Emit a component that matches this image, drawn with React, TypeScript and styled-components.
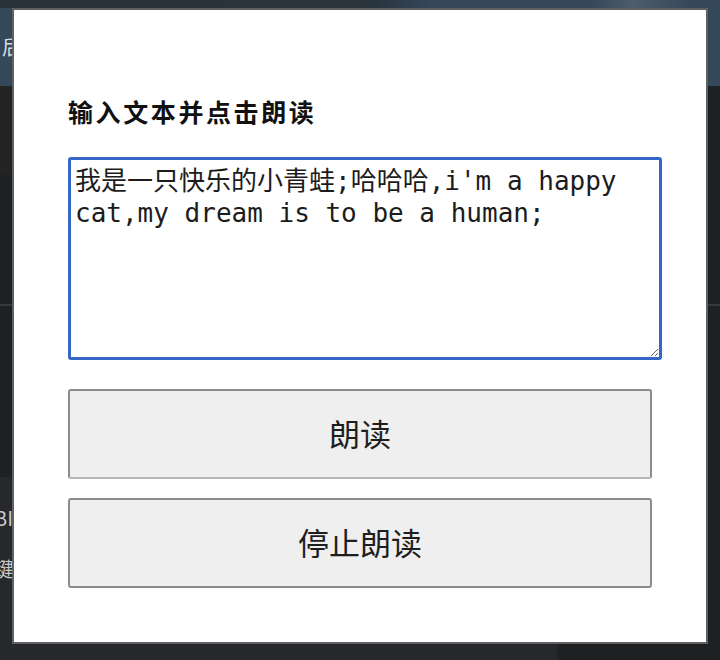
import React from "react";
import styled, { createGlobalStyle } from "styled-components";

const Global = createGlobalStyle`
  html, body { margin: 0; padding: 0; background: #1f2023; }
  * { box-sizing: border-box; }
`;

const Screen = styled.div`
  position: relative;
  width: 720px;
  height: 660px;
  overflow: hidden;
  font-family: "Noto Sans CJK SC", "Noto Sans", sans-serif;
`;

/* ---------- dimmed application behind the dialog ---------- */
const Backdrop = styled.div`
  display: flex;
  flex-direction: column;
  width: 100%;
  height: 100%;
`;

const Header = styled.header`
  display: flex;
  flex-direction: column;
  height: 86px;
  background: #34485a;
`;

const HeaderStrip = styled.div`
  height: 8px;
  background: linear-gradient(90deg, #27323b 0%, #29343d 52%, #34485a 60%, #34485a 82%, #4d5d6b 88%, #34485a 96%);
`;

const HeaderTitle = styled.div`
  padding: 25px 0 0 2px;
  color: #d8dde2;
  font-size: 20px;
  line-height: 28px;
`;

const Body = styled.div`
  flex: 1;
  display: grid;
  grid-template-columns: 557px 1fr;
`;

const Column = styled.div`
  display: flex;
  flex-direction: column;
  background: #1f2022;
`;

const Section = styled.div<{ $h?: number; $bg: string; $line?: boolean }>`
  ${(p) => (p.$h ? `height: ${p.$h}px;` : "flex: 1;")}
  background: ${(p) => p.$bg};
  border-bottom: ${(p) => (p.$line ? "2px solid #38393c" : "none")};
  display: flex;
  flex-direction: column;
`;

const SideText = styled.div<{ $top: number }>`
  margin: ${(p) => p.$top}px 0 0 -6px;
  color: #c9cacc;
  font-size: 20px;
  line-height: 26px;
  white-space: nowrap;
`;

/* ---------- the dialog ---------- */
const Dialog = styled.div`
  position: absolute;
  left: 12px;
  top: 8px;
  width: 696px;
  height: 636px;
  background: #ffffff;
  border: 2px solid #606162;
  padding: 83px 54px 0;
  display: flex;
  flex-direction: column;
`;

const Title = styled.h3`
  margin: 0;
  font-size: 25px;
  line-height: 36px;
  font-weight: 700;
  letter-spacing: 2.6px;
  color: #111;
`;

const TextBox = styled.textarea`
  display: block;
  box-sizing: content-box;
  width: calc(100% - 2px);
  height: 192px;
  margin: 28px 0 0;
  padding: 5px 2px 0 4px;
  border: 3px solid #3467c6;
  border-radius: 3px;
  outline: none;
  font-family: "DejaVu Sans Mono", "Noto Sans CJK SC", monospace;
  font-size: 26px;
  line-height: 32px;
  color: #1c1c1c;
  background: #fff;
  resize: both;
`;

const Buttons = styled.div`
  display: flex;
  flex-direction: column;
  gap: 19px;
  margin-top: 29px;
`;

const Button = styled.button<{ $pressed?: boolean }>`
  height: 90px;
  width: 100%;
  background: #efefef;
  border: 2px solid #8b8b8b;
  border-bottom-color: ${(p) => (p.$pressed ? "#b5b5b5" : "#8b8b8b")};
  border-radius: 3px;
  font-family: "Noto Sans CJK SC", "Noto Sans", sans-serif;
  font-size: 31px;
  color: #1e1e1e;
  cursor: pointer;
  padding: 0 0 3px;
`;

export default function App() {
  const [text, setText] = React.useState(
    "我是一只快乐的小青蛙;哈哈哈,i'm a happy cat,my dream is to be a human;"
  );
  return (
    <>
      <Global />
      <Screen>
        <Backdrop>
          <Header>
            <HeaderStrip />
            <HeaderTitle>后台管理</HeaderTitle>
          </Header>
          <Body>
            <Column>
              <Section $h={89} $bg="#242424" />
              <Section $h={131} $bg="#1f2024" $line />
              <Section $h={171} $bg="#1f2024" />
              <Section $bg="#27282b">
                <SideText $top={28}>BI 报表</SideText>
                <SideText $top={25}>键盘</SideText>
              </Section>
            </Column>
            <Column>
              <Section $h={220} $bg="#1f2022" $line />
              <Section $bg="#1f2022" />
            </Column>
          </Body>
        </Backdrop>
        <Dialog>
          <Title>输入文本并点击朗读</Title>
          <TextBox
            value={text}
            spellCheck={false}
            onChange={(e) => setText(e.target.value)}
          />
          <Buttons>
            <Button $pressed>朗读</Button>
            <Button>停止朗读</Button>
          </Buttons>
        </Dialog>
      </Screen>
    </>
  );
}
